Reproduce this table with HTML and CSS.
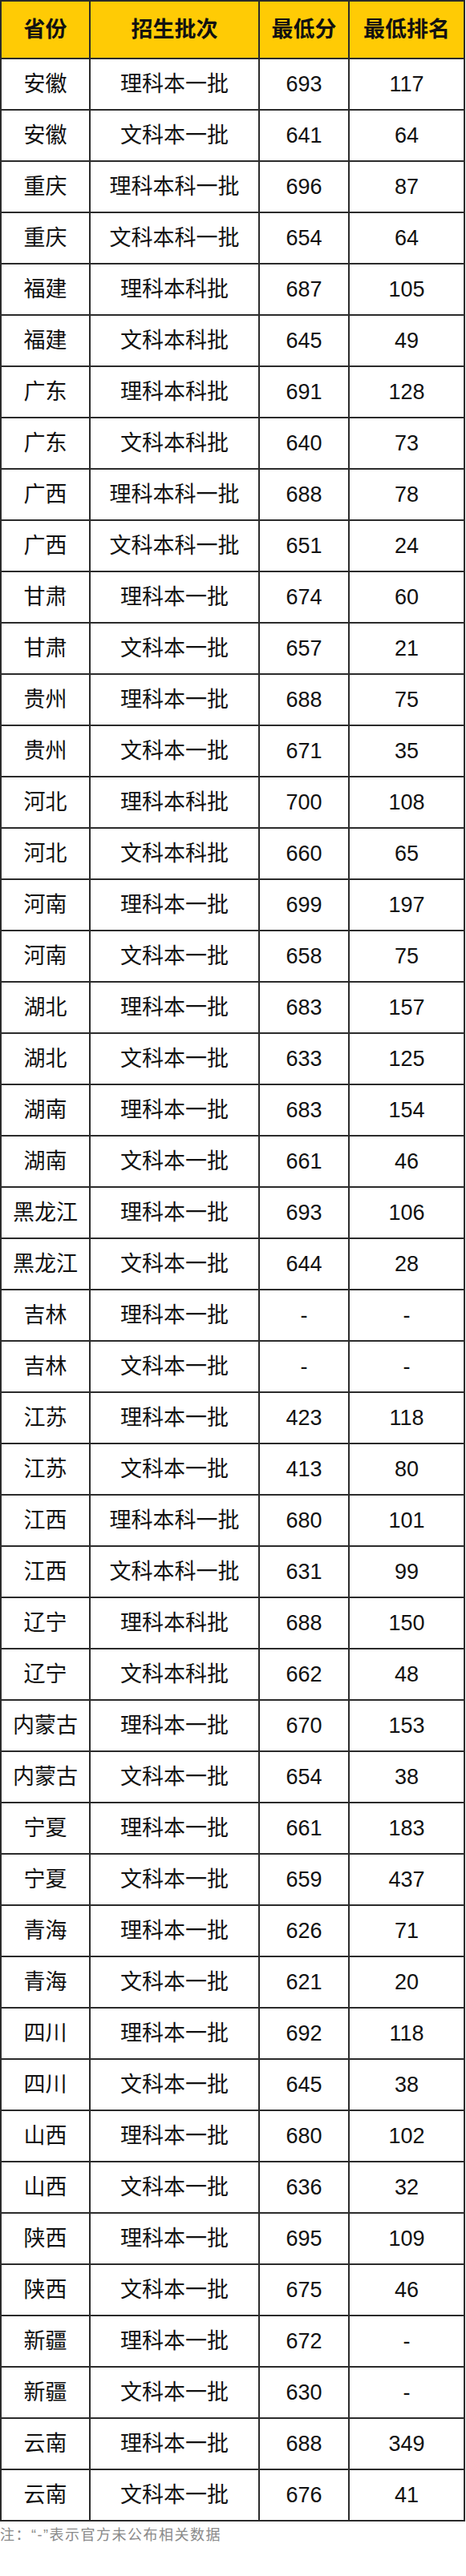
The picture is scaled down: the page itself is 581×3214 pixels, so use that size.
FILE: index.html
```html
<!DOCTYPE html>
<html lang="zh-CN">
<head>
<meta charset="utf-8">
<title>最低分</title>
<link rel="stylesheet" href="styles.css">
</head>
<body>
<table class="score-table">
  <colgroup>
    <col class="c-prov"><col class="c-batch"><col class="c-score"><col class="c-rank">
  </colgroup>
  <thead>
    <tr><th>省份</th><th>招生批次</th><th>最低分</th><th>最低排名</th></tr>
  </thead>
  <tbody>
    <tr><td>安徽</td><td>理科本一批</td><td>693</td><td>117</td></tr>
    <tr><td>安徽</td><td>文科本一批</td><td>641</td><td>64</td></tr>
    <tr><td>重庆</td><td>理科本科一批</td><td>696</td><td>87</td></tr>
    <tr><td>重庆</td><td>文科本科一批</td><td>654</td><td>64</td></tr>
    <tr><td>福建</td><td>理科本科批</td><td>687</td><td>105</td></tr>
    <tr><td>福建</td><td>文科本科批</td><td>645</td><td>49</td></tr>
    <tr><td>广东</td><td>理科本科批</td><td>691</td><td>128</td></tr>
    <tr><td>广东</td><td>文科本科批</td><td>640</td><td>73</td></tr>
    <tr><td>广西</td><td>理科本科一批</td><td>688</td><td>78</td></tr>
    <tr><td>广西</td><td>文科本科一批</td><td>651</td><td>24</td></tr>
    <tr><td>甘肃</td><td>理科本一批</td><td>674</td><td>60</td></tr>
    <tr><td>甘肃</td><td>文科本一批</td><td>657</td><td>21</td></tr>
    <tr><td>贵州</td><td>理科本一批</td><td>688</td><td>75</td></tr>
    <tr><td>贵州</td><td>文科本一批</td><td>671</td><td>35</td></tr>
    <tr><td>河北</td><td>理科本科批</td><td>700</td><td>108</td></tr>
    <tr><td>河北</td><td>文科本科批</td><td>660</td><td>65</td></tr>
    <tr><td>河南</td><td>理科本一批</td><td>699</td><td>197</td></tr>
    <tr><td>河南</td><td>文科本一批</td><td>658</td><td>75</td></tr>
    <tr><td>湖北</td><td>理科本一批</td><td>683</td><td>157</td></tr>
    <tr><td>湖北</td><td>文科本一批</td><td>633</td><td>125</td></tr>
    <tr><td>湖南</td><td>理科本一批</td><td>683</td><td>154</td></tr>
    <tr><td>湖南</td><td>文科本一批</td><td>661</td><td>46</td></tr>
    <tr><td>黑龙江</td><td>理科本一批</td><td>693</td><td>106</td></tr>
    <tr><td>黑龙江</td><td>文科本一批</td><td>644</td><td>28</td></tr>
    <tr><td>吉林</td><td>理科本一批</td><td>-</td><td>-</td></tr>
    <tr><td>吉林</td><td>文科本一批</td><td>-</td><td>-</td></tr>
    <tr><td>江苏</td><td>理科本一批</td><td>423</td><td>118</td></tr>
    <tr><td>江苏</td><td>文科本一批</td><td>413</td><td>80</td></tr>
    <tr><td>江西</td><td>理科本科一批</td><td>680</td><td>101</td></tr>
    <tr><td>江西</td><td>文科本科一批</td><td>631</td><td>99</td></tr>
    <tr><td>辽宁</td><td>理科本科批</td><td>688</td><td>150</td></tr>
    <tr><td>辽宁</td><td>文科本科批</td><td>662</td><td>48</td></tr>
    <tr><td>内蒙古</td><td>理科本一批</td><td>670</td><td>153</td></tr>
    <tr><td>内蒙古</td><td>文科本一批</td><td>654</td><td>38</td></tr>
    <tr><td>宁夏</td><td>理科本一批</td><td>661</td><td>183</td></tr>
    <tr><td>宁夏</td><td>文科本一批</td><td>659</td><td>437</td></tr>
    <tr><td>青海</td><td>理科本一批</td><td>626</td><td>71</td></tr>
    <tr><td>青海</td><td>文科本一批</td><td>621</td><td>20</td></tr>
    <tr><td>四川</td><td>理科本一批</td><td>692</td><td>118</td></tr>
    <tr><td>四川</td><td>文科本一批</td><td>645</td><td>38</td></tr>
    <tr><td>山西</td><td>理科本一批</td><td>680</td><td>102</td></tr>
    <tr><td>山西</td><td>文科本一批</td><td>636</td><td>32</td></tr>
    <tr><td>陕西</td><td>理科本一批</td><td>695</td><td>109</td></tr>
    <tr><td>陕西</td><td>文科本一批</td><td>675</td><td>46</td></tr>
    <tr><td>新疆</td><td>理科本一批</td><td>672</td><td>-</td></tr>
    <tr><td>新疆</td><td>文科本一批</td><td>630</td><td>-</td></tr>
    <tr><td>云南</td><td>理科本一批</td><td>688</td><td>349</td></tr>
    <tr><td>云南</td><td>文科本一批</td><td>676</td><td>41</td></tr>
  </tbody>
</table>
<p class="note">注：“-”表示官方未公布相关数据</p>
</body>
</html>
```
FILE: styles.css
```css
html, body {
  margin: 0;
  padding: 0;
  background: #ffffff;
}

body {
  font-family: "Liberation Sans", "Noto Sans CJK SC", sans-serif;
  color: #111111;
}

.score-table {
  border-collapse: collapse;
  table-layout: fixed;
  width: 578px;
  margin: 0;
}

.c-prov { width: 111px; }
.c-batch { width: 211px; }
.c-score { width: 112px; }
.c-rank { width: 144px; }

.score-table th,
.score-table td {
  border: 2px solid #2b2b2b;
  text-align: center;
  vertical-align: middle;
  padding: 0;
  font-size: 27px;
  line-height: 30px;
  white-space: nowrap;
}

.score-table th {
  background: #ffcb05;
  font-weight: bold;
  height: 70px;
}

.score-table td {
  height: 62px;
  font-weight: normal;
}

.note {
  margin: 4px 0 0 0;
  font-size: 18px;
  line-height: 26px;
  letter-spacing: 1.5px;
  color: #8a8a8a;
  font-family: "Liberation Sans", "Noto Sans CJK SC", sans-serif;
}
```
